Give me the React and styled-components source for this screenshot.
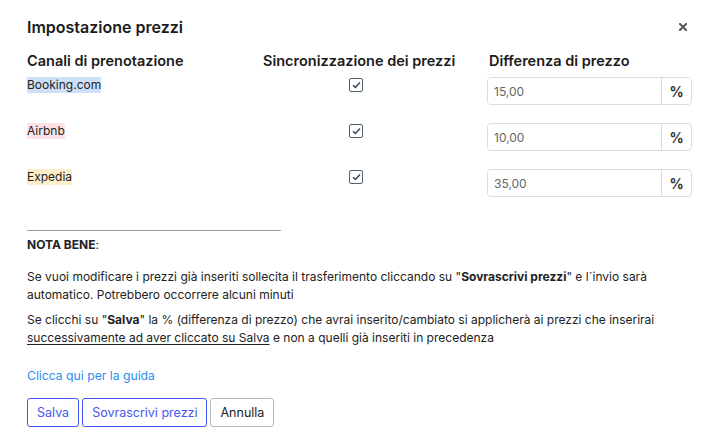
import React from "react";
import styled, { createGlobalStyle } from "styled-components";

const GlobalStyle = createGlobalStyle`
  html, body {
    margin: 0;
    padding: 0;
    background: #fff;
  }
  body {
    font-family: Inter, "Noto Sans", "Liberation Sans", sans-serif;
    color: #212529;
  }
`;

const Modal = styled.div`
  width: 718px;
  height: 442px;
  box-sizing: border-box;
  padding: 15px 26px 0 27px;
  background: #fff;
  overflow: hidden;
`;

const Header = styled.div`
  display: flex;
  justify-content: space-between;
  align-items: center;
`;

const Title = styled.h2`
  margin: 0;
  font-size: 16px;
  line-height: 24px;
  font-weight: 600;
  color: #1b1b1b;
`;

const CloseButton = styled.button`
  display: flex;
  align-items: center;
  justify-content: center;
  width: 20px;
  height: 20px;
  margin-right: -1px;
  padding: 0;
  border: 0;
  background: transparent;
  cursor: pointer;
`;

const Table = styled.div`
  display: grid;
  grid-template-columns: 236px 226px minmax(0, 1fr);
  row-gap: 18px;
  margin-top: 12px;
`;

const HeadCell = styled.div`
  font-size: 14.5px;
  line-height: 20px;
  font-weight: 600;
  color: #1b1b1b;
  white-space: nowrap;
  margin-bottom: -12px;
`;

const Cell = styled.div`
  display: flex;
  align-items: flex-start;
  min-width: 0;
  min-height: 28px;
  padding-left: ${(p) => p.$indent || 0}px;
`;

const Channel = styled.span`
  font-size: 12px;
  line-height: 16px;
  color: #222;
  background: ${(p) => p.$bg};
`;

const CheckBox = styled.span`
  display: inline-flex;
  align-items: center;
  justify-content: center;
  width: 14px;
  height: 14px;
  box-sizing: border-box;
  border: 1px solid #50636f;
  border-radius: 2px;
  margin-top: 1px;
`;

const InputGroup = styled.div`
  display: flex;
  width: calc(100% + 2px);
  height: 28px;
  box-sizing: border-box;
  border: 1px solid #d9dde1;
  border-radius: 4px;
  overflow: hidden;
  margin-left: -2px;
`;

const Input = styled.input`
  flex: 1;
  width: 0;
  min-width: 0;
  border: 0;
  outline: none;
  padding: 0 6px;
  font-family: inherit;
  font-size: 12px;
  color: #666;
  background: #fff;
`;

const Addon = styled.span`
  display: flex;
  align-items: center;
  justify-content: center;
  width: 29px;
  border-left: 1px solid #d9dde1;
  font-size: 14px;
  font-weight: 700;
  color: #333;
`;

const Separator = styled.div`
  width: 254px;
  margin-top: 33px;
  border-top: 1px solid #9a9a9a;
`;

const NoteTitle = styled.div`
  margin-top: 5px;
  font-size: 12px;
  line-height: 18px;
  color: #222;
  b {
    font-weight: 700;
  }
`;

const Paragraph = styled.p`
  margin: ${(p) => p.$top}px 0 0;
  font-size: 12px;
  line-height: 17.5px;
  color: #222;
  white-space: nowrap;
  b {
    font-weight: 700;
  }
  u {
    text-underline-offset: 2px;
  }
`;

const GuideLink = styled.a`
  display: block;
  margin-top: 21px;
  font-size: 12.2px;
  line-height: 18px;
  color: #2c8df0;
  text-decoration: none;
  cursor: pointer;
`;

const Actions = styled.div`
  display: flex;
  gap: 3px;
  margin-top: 13px;
`;

const Button = styled.button`
  height: 29px;
  padding: 0 9px;
  box-sizing: border-box;
  font-family: inherit;
  font-size: 12.5px;
  background: #fff;
  border-radius: 3px;
  cursor: pointer;
  border: 1px solid ${(p) => (p.$primary ? "#3d55f2" : "#b5b9bd")};
  color: ${(p) => (p.$primary ? "#4658f0" : "#222")};
`;

const channels = [
  { name: "Booking.com", bg: "#cde0f7", value: "15,00" },
  { name: "Airbnb", bg: "#fde3e5", value: "10,00" },
  { name: "Expedia", bg: "#fdefc9", value: "35,00" },
];

const CheckIcon = () => (
  <svg width="9" height="8" viewBox="0 0 9 8">
    <path
      d="M1 4.2 L3.4 6.4 L8 1.4"
      fill="none"
      stroke="#3a4a55"
      strokeWidth="1.5"
    />
  </svg>
);

const CloseIcon = () => (
  <svg width="8" height="8" viewBox="0 0 8 8">
    <path
      d="M1 1 L7 7 M7 1 L1 7"
      stroke="#555"
      strokeWidth="2"
      strokeLinecap="square"
    />
  </svg>
);

const App = () => {
  return (
    <>
      <GlobalStyle />
      <Modal>
        <Header>
          <Title>Impostazione prezzi</Title>
          <CloseButton aria-label="Chiudi">
            <CloseIcon />
          </CloseButton>
        </Header>

        <Table>
          <HeadCell>Canali di prenotazione</HeadCell>
          <HeadCell>Sincronizzazione dei prezzi</HeadCell>
          <HeadCell>Differenza di prezzo</HeadCell>
          {channels.map((channel) => (
            <React.Fragment key={channel.name}>
              <Cell>
                <Channel $bg={channel.bg}>{channel.name}</Channel>
              </Cell>
              <Cell $indent={86}>
                <CheckBox>
                  <CheckIcon />
                </CheckBox>
              </Cell>
              <Cell>
                <InputGroup>
                  <Input defaultValue={channel.value} />
                  <Addon>%</Addon>
                </InputGroup>
              </Cell>
            </React.Fragment>
          ))}
        </Table>

        <Separator />
        <NoteTitle>
          <b>NOTA BENE</b>:
        </NoteTitle>
        <Paragraph $top={14}>
          Se vuoi modificare i prezzi già inseriti sollecita il trasferimento
          cliccando su "<b>Sovrascrivi prezzi</b>" e l´invio sarà
          <br />
          automatico. Potrebbero occorrere alcuni minuti
        </Paragraph>
        <Paragraph $top={8}>
          Se clicchi su "<b>Salva</b>" la % (differenza di prezzo) che avrai
          inserito/cambiato si applicherà ai prezzi che inserirai
          <br />
          <u>successivamente ad aver cliccato su Salva</u> e non a quelli già
          inseriti in precedenza
        </Paragraph>
        <GuideLink>Clicca qui per la guida</GuideLink>
        <Actions>
          <Button $primary>Salva</Button>
          <Button $primary>Sovrascrivi prezzi</Button>
          <Button>Annulla</Button>
        </Actions>
      </Modal>
    </>
  );
};

export default App;
